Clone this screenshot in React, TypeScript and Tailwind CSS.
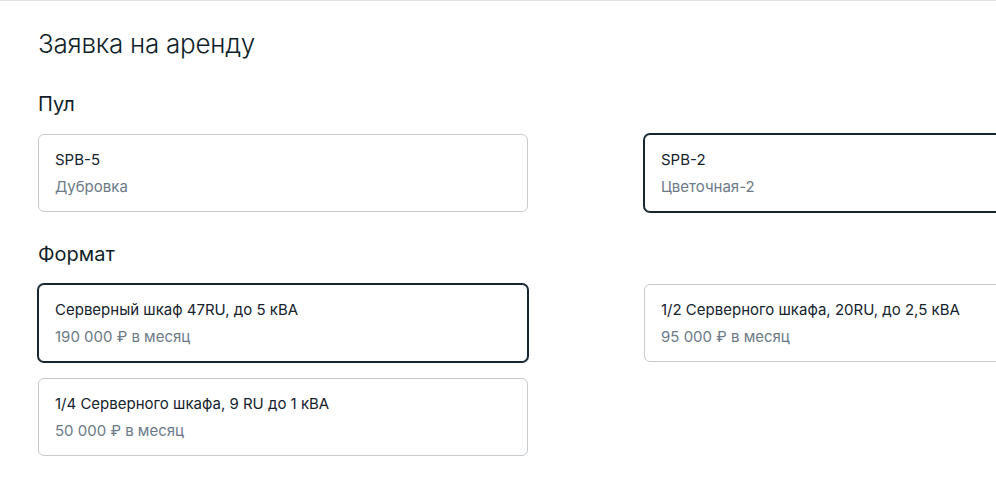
import React, { useState } from 'react';

type Option = { id: string; title: string; subtitle: string };

const POOLS: Option[] = [
  { id: 'spb5', title: 'SPB-5', subtitle: 'Дубровка' },
  { id: 'spb2', title: 'SPB-2', subtitle: 'Цветочная-2' },
];

const FORMATS: Option[] = [
  { id: 'full', title: 'Серверный шкаф 47RU, до 5 кВА', subtitle: '190 000 ₽ в месяц' },
  { id: 'half', title: '1/2 Серверного шкафа, 20RU, до 2,5 кВА', subtitle: '95 000 ₽ в месяц' },
  { id: 'quarter', title: '1/4 Серверного шкафа, 9 RU до 1 кВА', subtitle: '50 000 ₽ в месяц' },
];

const OptionCard: React.FC<{ option: Option; active: boolean; onClick: () => void }> = ({ option, active, onClick }) => (
  <button
    type="button"
    onClick={onClick}
    className={
      'flex flex-col text-left rounded-[6px] border bg-white pl-4 pr-4 pt-[13px] pb-3 ' +
      (active ? 'border-[#132631] ring-1 ring-[#132631]' : 'border-[#c6cbd0]')
    }
  >
    <span className="text-[15px] leading-6 text-[#16232d]">{option.title}</span>
    <span className="mt-[3px] text-[15px] leading-6 text-[#6c7a87]">{option.subtitle}</span>
  </button>
);

export default function App() {
  const [pool, setPool] = useState('spb2');
  const [format, setFormat] = useState('full');

  return (
    <div className="w-full h-[477px] overflow-hidden bg-white border-t border-[#e2e2e2] font-['Inter',sans-serif]">
      <div className="w-[1200px] pl-[38px] pt-[27px]">
        <h1 className="text-[26px] leading-8 font-light tracking-[-0.01em] text-[#0f1f2a]">Заявка на аренду</h1>

        <h2 className="mt-[30px] text-[20px] leading-7 text-[#0f1f2a]">Пул</h2>
        <div className="mt-4 grid grid-cols-[490px_490px] gap-x-[116px] gap-y-4">
          {POOLS.map(p => (
            <OptionCard key={p.id} option={p} active={pool === p.id} onClick={() => setPool(p.id)} />
          ))}
        </div>

        <h2 className="mt-7 text-[20px] leading-7 text-[#0f1f2a]">Формат</h2>
        <div className="mt-4 grid grid-cols-[490px_490px] gap-x-[116px] gap-y-4">
          {FORMATS.map(f => (
            <OptionCard key={f.id} option={f} active={format === f.id} onClick={() => setFormat(f.id)} />
          ))}
        </div>
      </div>
    </div>
  );
}
